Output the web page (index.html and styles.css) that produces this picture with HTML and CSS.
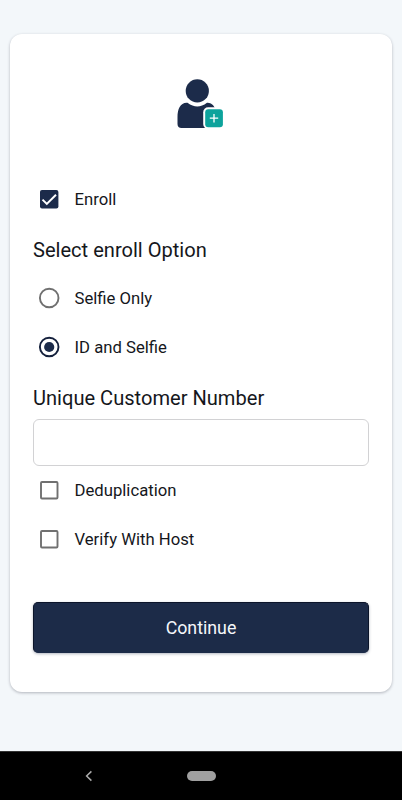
FILE: index.html
```html
<!DOCTYPE html>
<html lang="en">
<head>
<meta charset="utf-8">
<title>Enroll</title>
<link rel="stylesheet" href="styles.css">
</head>
<body>
<main class="page">
  <form class="card">
    <svg class="avatar" viewBox="0 0 48 50" aria-hidden="true">
      <circle cx="20.3" cy="11.9" r="11.6" fill="#1c2b4a"/>
      <path d="M10.500 23.800C14 26.400 17 27.500 20.300 27.500S26.600 26.400 30 23.800C35 23.500 38.800 27.500 39.500 36V49H4.500C2 49 .5 47.500 .5 45V38C.5 30 3.500 23.200 10.500 23.800Z" fill="#1c2b4a"/>
      <rect x="26.200" y="28.300" width="21.600" height="21.700" rx="5" fill="#fff"/>
      <rect x="28.200" y="30.200" width="17.700" height="18" rx="3" fill="#0da39c"/>
      <path d="M37 35v8.400M32.800 39.200h8.400" stroke="#fff" stroke-width="1.300"/>
    </svg>
    <label class="option">
      <svg class="mark" viewBox="0 0 24 24"><rect x="3" y="3" width="18.400" height="18.400" rx="2" fill="#1c2b4a"/><path d="M5.500 12.600l4.300 4.300L19 7.700" fill="none" stroke="#fff" stroke-width="2"/></svg>
      <span>Enroll</span>
    </label>
    <h2 class="heading heading-select">Select enroll Option</h2>
    <label class="option">
      <svg class="mark" viewBox="0 0 24 24"><circle cx="12.200" cy="12" r="9.300" fill="none" stroke="#707070" stroke-width="1.900"/></svg>
      <span>Selfie Only</span>
    </label>
    <label class="option">
      <svg class="mark" viewBox="0 0 24 24"><circle cx="12.200" cy="12" r="9.300" fill="none" stroke="#14203c" stroke-width="1.900"/><circle cx="12.200" cy="12" r="5.100" fill="#1c2b4a"/></svg>
      <span>ID and Selfie</span>
    </label>
    <h2 class="heading heading-number">Unique Customer Number</h2>
    <input class="field" type="text" aria-label="Unique Customer Number">
    <label class="option">
      <svg class="mark" viewBox="0 0 24 24"><rect x="4" y="4" width="16.500" height="16.500" rx="1" fill="none" stroke="#707070" stroke-width="1.900"/></svg>
      <span>Deduplication</span>
    </label>
    <label class="option">
      <svg class="mark" viewBox="0 0 24 24"><rect x="4" y="4" width="16.500" height="16.500" rx="1" fill="none" stroke="#707070" stroke-width="1.900"/></svg>
      <span>Verify With Host</span>
    </label>
    <button class="continue" type="button">Continue</button>
  </form>
</main>
<nav class="navbar">
  <svg class="back" viewBox="0 0 8 12"><path d="M6.400 1.400L1.600 6l4.800 4.600" fill="none" stroke="#aaa" stroke-width="1.500"/></svg>
  <span class="home"></span>
</nav>
</body>
</html>
```
FILE: styles.css
```css
* { box-sizing: border-box; }
body {
  margin: 0;
  height: 800px;
  display: flex;
  flex-direction: column;
  overflow: hidden;
  background: #f3f7fa;
  font-family: Roboto, "Liberation Sans", sans-serif;
  color: #15171c;
}
.page { flex: 1; padding: 34px 10px 0; }
.card {
  height: 658px;
  padding: 45px 23px 0;
  display: flex;
  flex-direction: column;
  background: #fff;
  border-radius: 12px;
  box-shadow: 0 1px 3px rgba(40, 45, 60, .32);
}
.avatar {
  width: 48px;
  height: 50px;
  margin: 0 0 46px 144px;
  flex: none;
}
.option {
  height: 49px;
  flex: none;
  display: flex;
  align-items: center;
  gap: 13.500px;
  padding-left: 4px;
  font-size: 16.700px;
}
.mark { width: 24px; height: 24px; flex: none; margin-bottom: 2px; }
.heading {
  margin: 0;
  flex: none;
  font-size: 20.080px;
  font-weight: 400;
  line-height: 24px;
}
.heading-select { margin: 14px 0 12px; }
.heading-number { margin: 14px 0 9px; }
.field {
  width: 100%;
  height: 47px;
  flex: none;
  padding: 0 12px;
  border: 1px solid #d2d2d4;
  border-radius: 6px;
  background: #fff;
  font: inherit;
}
.continue {
  width: 100%;
  height: 51px;
  flex: none;
  margin-top: 38px;
  padding: 0 0 1px;
  border: 1px solid #0b1429;
  border-bottom-color: #1c2b48;
  border-radius: 5px;
  background: #1c2b48;
  box-shadow: 0 1px 3px rgba(28, 43, 72, .35);
  color: #f5f7fa;
  font: 17.800px Roboto, "Liberation Sans", sans-serif;
}
.navbar {
  height: 49px;
  display: flex;
  align-items: center;
  padding-left: 85px;
  border-top: 1px solid #333;
  background: #000;
}
.back { width: 8px; height: 12px; }
.home {
  width: 29px;
  height: 10px;
  margin-left: 94px;
  border-radius: 5px;
  background: #a0a0a0;
}
```
